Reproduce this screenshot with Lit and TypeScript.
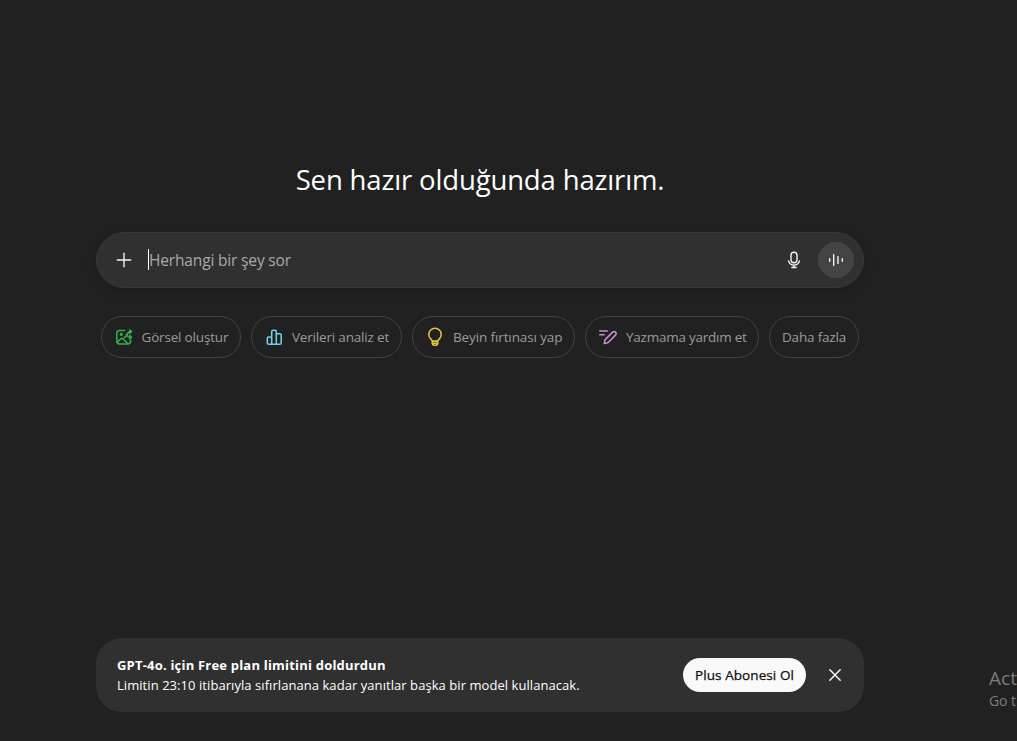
import { LitElement, html, css, svg } from "lit";
import { customElement } from "lit/decorators.js";

const icons = {
  image: svg`<path d="M10.600 3.400H5.400a2.600 2.600 0 0 0-2.600 2.600v8.300a2.600 2.600 0 0 0 2.600 2.600h8.600a2.600 2.600 0 0 0 2.600-2.600v-.9"/><path d="M3.200 15.400 6.600 12c.8-.8 1.700-.8 2.500 0l4.600 4.600"/><circle cx="7.200" cy="7.400" r=".8" fill="currentColor"/><path d="M17.200 4.600h-1.400c-3.200 0-2.300 5.800-5.600 5.800M15.600 2.700l1.900 1.900-1.900 1.900M17.200 10.400h-1.600c-1.600 0-2.400-1.500-3.200-2.900M15.600 8.500l1.900 1.900-1.900 1.900"/>`,
  chart: svg`<path d="M7.700 17.200V4.700c0-.9.6-1.500 1.500-1.500h1.600c.9 0 1.500.6 1.500 1.500v12.500M7.700 9.900H4.800c-.9 0-1.500.6-1.500 1.500v4.300c0 .9.6 1.500 1.500 1.500h10.900c.9 0 1.500-.6 1.500-1.500V8.200c0-.9-.6-1.500-1.500-1.500h-3.400"/>`,
  bulb: svg`<path d="M7.400 14.400c-.2-1.100-.9-1.700-1.700-2.500a6.200 6.200 0 1 1 8.600 0c-.8.8-1.500 1.400-1.700 2.500M7.300 14.100h5.400v2c0 1.200-.9 2.100-2.100 2.100H9.400c-1.200 0-2.100-.9-2.100-2.100z"/><path d="M7.500 16.200h5"/>`,
  pen: svg`<path d="M1.800 4h7.600M1.800 7.700h4.300" /><path d="m7 12.900-.8 3.700 3.700-.8 7.400-7.400c2.400-2.400-.7-5.400-3-3z"/>`,
  plus: svg`<path d="M10 3.300v13.400M3.300 10h13.400"/>`,
  mic: svg`<rect x="7" y="2.200" width="6" height="10.600" rx="3"/><path d="M4.500 10.900a5.700 5.700 0 0 0 11 0M10 15v2.500M7.900 17.500h4.200"/>`,
  voice: svg`<path d="M3.700 8.700v2.600M7.700 4.800v10.400M12 6.600v6.800M16.300 8.700v2.600"/>`,
  close: svg`<path d="m4.800 4.800 10.400 10.400M15.200 4.800 4.800 15.200"/>`,
};

const icon = (name: keyof typeof icons) =>
  html`<svg class="icon ${name}" viewBox="0 0 20 20" aria-hidden="true">${icons[name]}</svg>`;

const suggestions: { id: string; label: string; icon?: keyof typeof icons }[] = [
  { id: "create", label: "Görsel oluştur", icon: "image" },
  { id: "analyze", label: "Verileri analiz et", icon: "chart" },
  { id: "brainstorm", label: "Beyin fırtınası yap", icon: "bulb" },
  { id: "write", label: "Yazmama yardım et", icon: "pen" },
  { id: "more", label: "Daha fazla" },
];

@customElement("app-root")
export class AppRoot extends LitElement {
  static styles = css`
    :host {
      display: flex;
      height: 741px;
      overflow: hidden;
      background: #212121;
      color: #fff;
      font-family: "Segoe UI", "Open Sans", "Noto Sans", sans-serif;
    }
    * { box-sizing: border-box; }
    button { font: inherit; border: 0; padding: 0; background: none; color: inherit; }
    .icon {
      width: 20px; height: 20px; flex: none; display: block;
      fill: none; stroke: currentColor; stroke-width: 1.4;
      stroke-linecap: round; stroke-linejoin: round;
    }
    .main {
      flex: none; width: 960px; height: 741px;
      padding: 162px 96px 29px;
      display: flex; flex-direction: column;
    }
    h1 {
      margin: 0 0 34px; height: 36px; line-height: 36px; letter-spacing: -.15px;
      font-size: 27.5px; font-weight: 400; text-align: center; white-space: nowrap;
    }
    .composer {
      height: 56px; border-radius: 28px; flex: none;
      background: #303030; border: 1px solid #383838;
      box-shadow: 0 4px 12px rgba(0, 0, 0, .16);
      display: flex; align-items: center; padding: 0 9px 0 17px;
    }
    .field { display: flex; flex: 1; align-items: center; margin-left: 14px; }
    .caret { width: 1px; height: 21px; background: #fff; margin-top: -2px; }
    .placeholder {
      font-size: 15.5px; line-height: 24px; letter-spacing: -.16px;
      color: #a9a9a9; white-space: nowrap;
    }
    .plus, .mic { color: #f3f3f3; }
    .speak {
      width: 36px; height: 36px; border-radius: 50%; background: #444; margin-left: 14px;
      display: grid; place-items: center; color: #f3f3f3;
    }
    .chips { display: flex; justify-content: center; gap: 10px; margin-top: 28px; }
    .chip {
      height: 42px; border: 1px solid #424242; border-radius: 21px; flex: none;
      display: flex; align-items: center; padding: 0 0 0 12px; gap: 8px;
      font-size: 13.5px; letter-spacing: -.18px; color: #9b9b9b; white-space: nowrap;
    }
    .create { width: 140px; gap: 7.5px; }
    .analyze { width: 151px; }
    .brainstorm { width: 163px; letter-spacing: -.12px; }
    .write { width: 174px; letter-spacing: -.24px; }
    .more { width: 90px; }
    .chip .icon { stroke-width: 1.55; }
    .image { color: #35ae47; }
    .chart { color: #76d0eb; }
    .bulb { color: #e2c541; }
    .pen { color: #cb8bd0; }
    .banner {
      margin-top: auto; height: 74px; border-radius: 26px; background: #303030;
      display: flex; align-items: center; padding: 0 19px 0 21px;
    }
    .copy { flex: 1; font-size: 13px; line-height: 20px; white-space: nowrap; }
    .title { font-weight: 700; letter-spacing: .2px; }
    .detail { letter-spacing: .06px; }
    .upgrade {
      width: 123px; height: 34px; border-radius: 17px; background: #f9f9f9; color: #0d0d0d;
      font-size: 13.5px; font-weight: 500; letter-spacing: .08px; margin-right: 19px; white-space: nowrap;
      -webkit-text-stroke: .25px #0d0d0d;
    }
    .watermark { flex: none; width: 57px; padding: 666px 0 0 29px; color: #7b7b7b; white-space: nowrap; }
    .activate { font-size: 19px; line-height: 24px; letter-spacing: .1px; }
    .settings { font-size: 14px; line-height: 21px; letter-spacing: -.1px; }
  `;

  render() {
    return html`
      <main class="main">
        <h1>Sen hazır olduğunda hazırım.</h1>
        <div class="composer">
          <button aria-label="Ekle">${icon("plus")}</button>
          <div class="field"><span class="caret"></span><span class="placeholder">Herhangi bir şey sor</span></div>
          <button aria-label="Dikte et">${icon("mic")}</button>
          <button class="speak" aria-label="Ses modu">${icon("voice")}</button>
        </div>
        <div class="chips">
          ${suggestions.map((s) => html`<button class="chip ${s.id}">${s.icon ? icon(s.icon) : ""}<span>${s.label}</span></button>`)}
        </div>
        <section class="banner">
          <div class="copy">
            <div class="title">GPT-4o. için Free plan limitini doldurdun</div>
            <div class="detail">Limitin 23:10 itibarıyla sıfırlanana kadar yanıtlar başka bir model kullanacak.</div>
          </div>
          <button class="upgrade">Plus Abonesi Ol</button>
          <button aria-label="Kapat">${icon("close")}</button>
        </section>
      </main>
      <aside class="watermark">
        <div class="activate">Act</div>
        <div class="settings">Go t</div>
      </aside>
    `;
  }
}
